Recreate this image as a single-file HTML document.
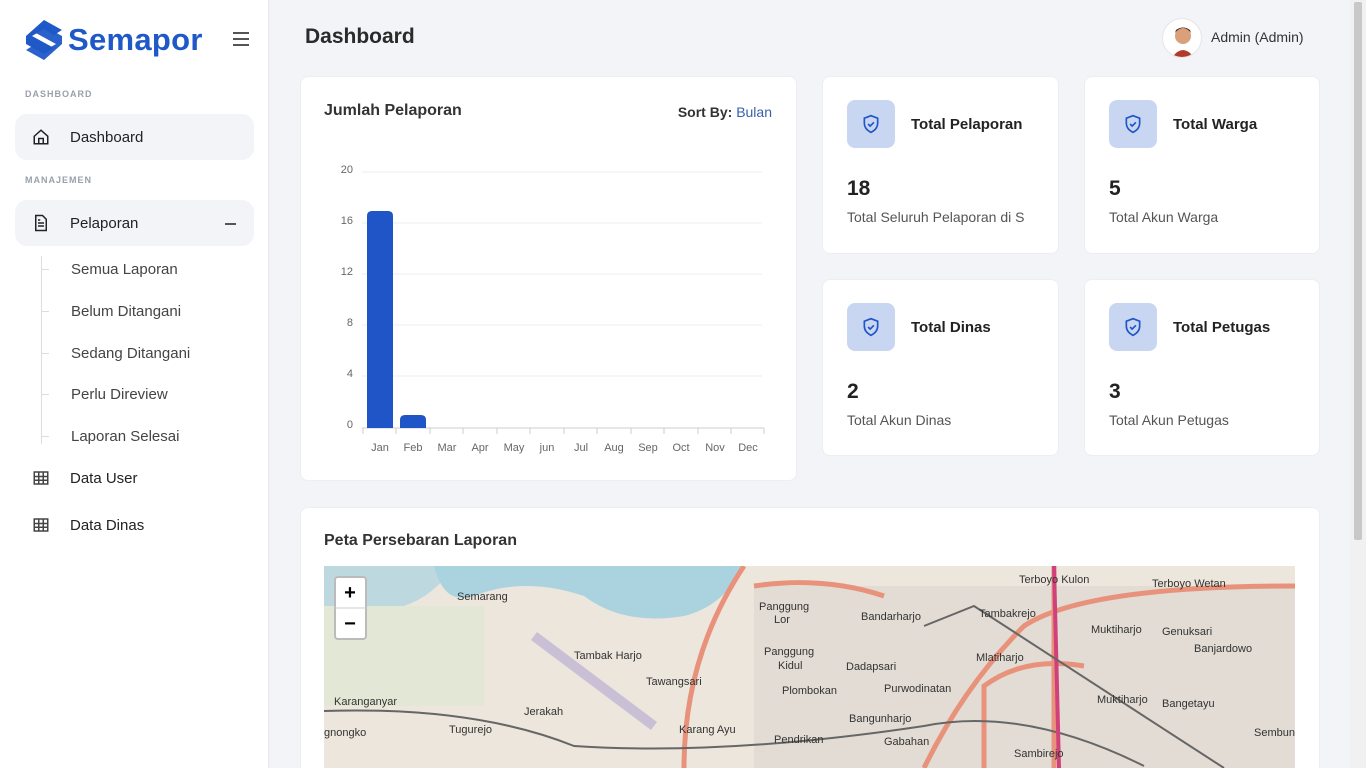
<!DOCTYPE html>
<html><head><meta charset="utf-8"><style>
*{box-sizing:border-box;margin:0;padding:0}
html,body{width:1366px;height:768px;overflow:hidden}
body{background:#f3f4f7;font-family:"Liberation Sans",sans-serif;color:#333;position:relative}
.sb{position:absolute;left:0;top:0;width:269px;height:768px;background:#fff;border-right:1px solid #e8e9ee}
.logo{position:absolute;left:24px;top:18px;display:flex;align-items:center}
.logo span{font-size:31px;font-weight:bold;color:#1f58c7;margin-left:4px;letter-spacing:.3px}
.hb{position:absolute;left:233px;top:32px;width:16px}
.hb i{display:block;height:2px;background:#555;margin-bottom:4px}
.sec{position:absolute;left:25px;font-size:9px;font-weight:bold;color:#9aa0aa;letter-spacing:1px}
.it{position:absolute;left:15px;width:239px;height:46px;border-radius:12px;display:flex;align-items:center;font-size:15px;color:#222}
.it.a{background:#f3f4f8}
.it svg{position:absolute;left:17px}
.it span{position:absolute;left:55px}
.sub{position:absolute;left:71px;font-size:15px;color:#444}
.tree{position:absolute;left:41px;top:256px;width:1px;height:188px;background:#ddd}
.tk{position:absolute;left:41px;width:8px;height:1px;background:#ddd}
.card{position:absolute;background:#fff;border-radius:8px;border:1px solid #eceef2}
h1{position:absolute;left:305px;top:25px;font-size:21px;font-weight:bold;color:#2a2a2a}
.ic{position:absolute;left:24px;top:23px;width:48px;height:48px;border-radius:8px;background:#c9d6f2;display:flex;align-items:center;justify-content:center}
.ct{position:absolute;left:88px;top:39px;font-size:15px;font-weight:bold;color:#222}
.cn{position:absolute;left:24px;top:100px;font-size:21px;font-weight:bold;color:#222}
.cd{position:absolute;left:24px;top:132px;font-size:14px;color:#555;white-space:nowrap;overflow:hidden;width:188px}
.yl{position:absolute;font-size:11px;color:#666;width:30px;text-align:right}
.ml{position:absolute;top:442px;font-size:11px;color:#666;width:34px;text-align:center}
</style></head><body>
<div class="sb">
 <div class="logo"><svg width="40" height="44" viewBox="0 0 40 44"><path d="M20 2 L38 12 L30 17 L20 11 L8 18 L30 30 L20 36 L2 26 L2 18 Z" fill="#1f58c7"/><path d="M20 42 L2 32 L10 27 L20 33 L32 26 L10 14 L20 8 L38 18 L38 26 Z" fill="#1f58c7" opacity=".95"/></svg><span>Semapor</span></div>
 <div class="hb"><i></i><i></i><i></i></div>
 <div class="sec" style="top:89px">DASHBOARD</div>
 <div class="it a" style="top:114px"><svg width="18" height="18" viewBox="0 0 24 24" fill="none" stroke="#222" stroke-width="2"><path d="M3 11 L12 3 L21 11 V21 H3 Z M9 21 V14 H15 V21"/></svg><span>Dashboard</span></div>
 <div class="sec" style="top:175px">MANAJEMEN</div>
 <div class="it a" style="top:200px"><svg width="18" height="18" viewBox="0 0 24 24" fill="none" stroke="#222" stroke-width="2"><path d="M5 2 H14 L19 7 V22 H5 Z M8 12 H16 M8 16 H16 M8 8 H11"/></svg><span>Pelaporan</span><i style="position:absolute;left:210px;top:23px;width:11px;height:1.5px;background:#555"></i></div>
 <div class="tree"></div>
 <div class="tk" style="top:269px"></div><div class="tk" style="top:311px"></div><div class="tk" style="top:353px"></div><div class="tk" style="top:394px"></div><div class="tk" style="top:436px"></div>
 <div class="sub" style="top:261px">Semua Laporan</div>
 <div class="sub" style="top:303px">Belum Ditangani</div>
 <div class="sub" style="top:345px">Sedang Ditangani</div>
 <div class="sub" style="top:386px">Perlu Direview</div>
 <div class="sub" style="top:428px">Laporan Selesai</div>
 <div class="it" style="top:455px"><svg width="18" height="18" viewBox="0 0 24 24" fill="none" stroke="#444" stroke-width="2"><rect x="3" y="4" width="18" height="16"/><path d="M3 10 H21 M3 15 H21 M9 4 V20 M15 4 V20"/></svg><span>Data User</span></div>
 <div class="it" style="top:502px"><svg width="18" height="18" viewBox="0 0 24 24" fill="none" stroke="#444" stroke-width="2"><rect x="3" y="4" width="18" height="16"/><path d="M3 10 H21 M3 15 H21 M9 4 V20 M15 4 V20"/></svg><span>Data Dinas</span></div>
</div>
<h1>Dashboard</h1>
<div style="position:absolute;left:1162px;top:18px;width:40px;height:40px;border-radius:50%;background:#fff;border:1px solid #e5e5e5;overflow:hidden"><svg width="40" height="40"><circle cx="20" cy="17" r="8" fill="#d9a07a"/><path d="M12 14 Q20 4 28 14 L27 11 Q20 6 13 11Z" fill="#4a2a1a"/><path d="M8 40 Q20 22 32 40Z" fill="#b23a2a"/></svg></div>
<div style="position:absolute;left:1211px;top:29px;font-size:14px;color:#333">Admin (Admin)</div>
<div style="position:absolute;right:0;top:0;width:16px;height:768px;background:#f1f1f1"><div style="margin:2px 4px;height:538px;background:#c8c8c8;border-radius:2px"></div></div>

<div class="card" style="left:300px;top:76px;width:497px;height:405px">
 <div style="position:absolute;left:23px;top:25px;font-size:16px;font-weight:bold;color:#333">Jumlah Pelaporan</div>
 <div style="position:absolute;right:24px;top:27px;font-size:14px;color:#333"><b>Sort By:</b> <span style="color:#3a5fa8">Bulan</span></div>
</div>
<svg style="position:absolute;left:0;top:0" width="800" height="480">
 <g stroke="#eee"><line x1="362" y1="172" x2="762" y2="172"/><line x1="362" y1="223" x2="762" y2="223"/><line x1="362" y1="274" x2="762" y2="274"/><line x1="362" y1="325" x2="762" y2="325"/><line x1="362" y1="376" x2="762" y2="376"/></g>
 <line x1="362" y1="428" x2="764" y2="428" stroke="#ccc"/>
 <g stroke="#ccc"><line x1="363" y1="428" x2="363" y2="434"/><line x1="396" y1="428" x2="396" y2="434"/><line x1="430" y1="428" x2="430" y2="434"/><line x1="463" y1="428" x2="463" y2="434"/><line x1="497" y1="428" x2="497" y2="434"/><line x1="530" y1="428" x2="530" y2="434"/><line x1="564" y1="428" x2="564" y2="434"/><line x1="597" y1="428" x2="597" y2="434"/><line x1="631" y1="428" x2="631" y2="434"/><line x1="664" y1="428" x2="664" y2="434"/><line x1="698" y1="428" x2="698" y2="434"/><line x1="731" y1="428" x2="731" y2="434"/><line x1="764" y1="428" x2="764" y2="434"/></g>
 <path d="M367 428 V216 Q367 211 372 211 H388 Q393 211 393 216 V428Z" fill="#1f55c7"/>
 <path d="M400 428 V420 Q400 415 405 415 H421 Q426 415 426 420 V428Z" fill="#1f55c7"/>
</svg>
<div class="yl" style="left:323px;top:164px">20</div><div class="yl" style="left:323px;top:215px">16</div><div class="yl" style="left:323px;top:266px">12</div><div class="yl" style="left:323px;top:317px">8</div><div class="yl" style="left:323px;top:368px">4</div><div class="yl" style="left:323px;top:419px">0</div>
<div class="ml" style="left:363px">Jan</div><div class="ml" style="left:396px">Feb</div><div class="ml" style="left:430px">Mar</div><div class="ml" style="left:463px">Apr</div><div class="ml" style="left:497px">May</div><div class="ml" style="left:530px">jun</div><div class="ml" style="left:564px">Jul</div><div class="ml" style="left:597px">Aug</div><div class="ml" style="left:631px">Sep</div><div class="ml" style="left:664px">Oct</div><div class="ml" style="left:698px">Nov</div><div class="ml" style="left:731px">Dec</div>

<div class="card" style="left:822px;top:76px;width:237px;height:178px"><div class="ic"><svg width="20" height="20" viewBox="0 0 24 24" fill="none" stroke="#1f55c7" stroke-width="2"><path d="M12 2 L20 5 V11 Q20 18 12 22 Q4 18 4 11 V5Z M8.5 12 L11 14.5 L15.5 10"/></svg></div><div class="ct">Total Pelaporan</div><div class="cn">18</div><div class="cd">Total Seluruh Pelaporan di S</div></div>
<div class="card" style="left:1084px;top:76px;width:236px;height:178px"><div class="ic"><svg width="20" height="20" viewBox="0 0 24 24" fill="none" stroke="#1f55c7" stroke-width="2"><path d="M12 2 L20 5 V11 Q20 18 12 22 Q4 18 4 11 V5Z M8.5 12 L11 14.5 L15.5 10"/></svg></div><div class="ct">Total Warga</div><div class="cn">5</div><div class="cd">Total Akun Warga</div></div>
<div class="card" style="left:822px;top:279px;width:237px;height:177px"><div class="ic"><svg width="20" height="20" viewBox="0 0 24 24" fill="none" stroke="#1f55c7" stroke-width="2"><path d="M12 2 L20 5 V11 Q20 18 12 22 Q4 18 4 11 V5Z M8.5 12 L11 14.5 L15.5 10"/></svg></div><div class="ct">Total Dinas</div><div class="cn">2</div><div class="cd">Total Akun Dinas</div></div>
<div class="card" style="left:1084px;top:279px;width:236px;height:177px"><div class="ic"><svg width="20" height="20" viewBox="0 0 24 24" fill="none" stroke="#1f55c7" stroke-width="2"><path d="M12 2 L20 5 V11 Q20 18 12 22 Q4 18 4 11 V5Z M8.5 12 L11 14.5 L15.5 10"/></svg></div><div class="ct">Total Petugas</div><div class="cn">3</div><div class="cd">Total Akun Petugas</div></div>

<div class="card" style="left:300px;top:507px;width:1020px;height:261px;border-bottom:none;border-radius:8px 8px 0 0">
 <div style="position:absolute;left:23px;top:24px;font-size:16px;font-weight:bold;color:#333">Peta Persebaran Laporan</div>
</div>
<svg style="position:absolute;left:324px;top:566px" width="971" height="202" font-family="Liberation Sans" font-size="11" fill="#333">
 <rect width="971" height="202" fill="#ece6dc"/>
 <path d="M120 0 H420 Q400 40 360 50 Q300 60 260 30 Q200 10 150 30 Q120 40 110 0Z" fill="#aad3df"/>
 <path d="M0 0 H130 Q110 30 80 40 H0Z" fill="#aad3df" opacity=".7"/>
 <rect x="0" y="40" width="160" height="100" fill="#e3e8d6"/>
 <rect x="430" y="20" width="541" height="182" fill="#e2dcd4"/>
 <path d="M210 70 L330 160" stroke="#c9c0d5" stroke-width="10"/>
 <g fill="none" stroke="#e8927c" stroke-width="5">
  <path d="M420 0 Q360 90 360 202"/><path d="M600 202 Q640 120 700 60 Q760 20 971 20"/>
  <path d="M660 202 V120 Q700 90 760 100"/><path d="M730 0 V202"/><path d="M430 20 Q500 10 560 30"/>
 </g>
 <path d="M0 145 Q150 140 250 180 Q400 190 600 160 Q700 140 820 200" fill="none" stroke="#666" stroke-width="2"/>
 <path d="M730 0 L735 202" stroke="#d0407a" stroke-width="4"/>
 <path d="M600 60 L650 40 L900 202" fill="none" stroke="#666" stroke-width="2"/>
 <text x="133" y="34">Semarang</text><text x="435" y="44">Panggung</text><text x="450" y="57">Lor</text><text x="537" y="54">Bandarharjo</text><text x="695" y="17">Terboyo Kulon</text><text x="828" y="21">Terboyo Wetan</text><text x="655" y="51">Tambakrejo</text><text x="767" y="67">Muktiharjo</text><text x="838" y="69">Genuksari</text><text x="250" y="93">Tambak Harjo</text><text x="440" y="89">Panggung</text><text x="454" y="103">Kidul</text><text x="522" y="104">Dadapsari</text><text x="652" y="95">Mlatiharjo</text><text x="322" y="119">Tawangsari</text><text x="560" y="126">Purwodinatan</text><text x="458" y="128">Plombokan</text><text x="10" y="139">Karanganyar</text><text x="200" y="149">Jerakah</text><text x="525" y="156">Bangunharjo</text><text x="773" y="137">Muktiharjo</text><text x="838" y="141">Bangetayu</text><text x="355" y="167">Karang Ayu</text><text x="125" y="167">Tugurejo</text><text x="0" y="170">gnongko</text><text x="450" y="177">Pendrikan</text><text x="560" y="179">Gabahan</text><text x="690" y="191">Sambirejo</text><text x="930" y="170">Sembungh</text><text x="870" y="86">Banjardowo</text>
 <rect x="11" y="11" width="31" height="62" rx="3" fill="#fff" stroke="#bbb" stroke-width="2"/><line x1="11" y1="42" x2="42" y2="42" stroke="#ccc"/>
 <text x="26" y="33" text-anchor="middle" font-size="20" font-weight="bold" fill="#000">+</text><text x="26" y="64" text-anchor="middle" font-size="20" font-weight="bold" fill="#000">−</text>
</svg>
</body></html>
